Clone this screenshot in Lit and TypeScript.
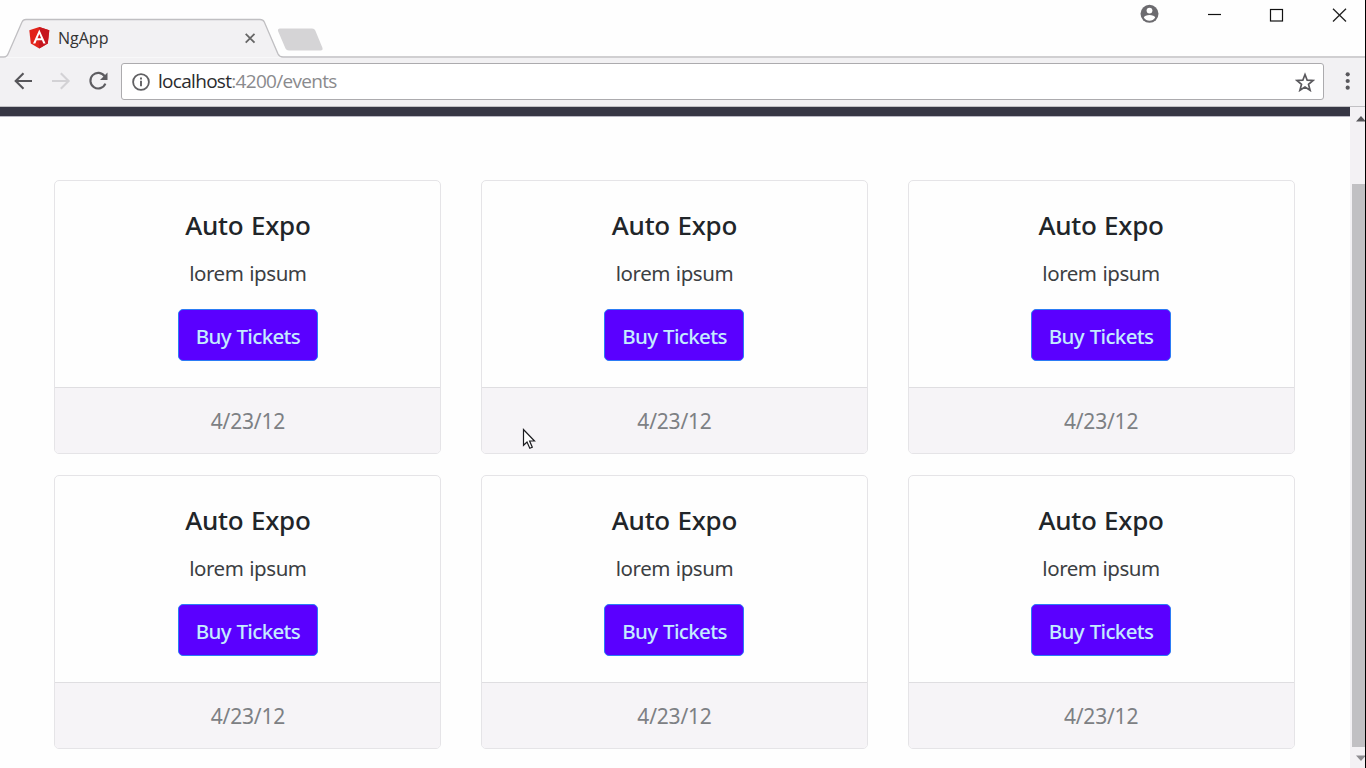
import { LitElement, html, css, svg } from "lit";
import { customElement, property } from "lit/decorators.js";

interface EventItem {
  title: string;
  description: string;
  date: string;
}

const EVENTS: EventItem[] = Array.from({ length: 6 }, () => ({
  title: "Auto Expo",
  description: "lorem ipsum",
  date: "4/23/12",
}));

@customElement("event-card")
export class EventCard extends LitElement {
  @property({ attribute: false }) event!: EventItem;

  static styles = css`
    :host {
      display: flex;
      flex-direction: column;
      box-sizing: border-box;
      height: 274px;
      border: 1px solid #e5e4e7;
      border-radius: 5px;
      background: #fefefe;
      overflow: hidden;
      text-align: center;
      white-space: nowrap;
      font-family: "Noto Sans", "Open Sans", sans-serif;
    }
    .body {
      flex: 1;
      display: flex;
      flex-direction: column;
      align-items: center;
      padding-top: 28px;
    }
    .title {
      margin: 0;
      font-size: 26px;
      line-height: 33px;
      font-weight: 500;
      letter-spacing: -0.25px;
      word-spacing: 1px;
      color: #212529;
    }
    .text {
      margin: 15px 0 0;
      font-size: 20.5px;
      line-height: 33px;
      letter-spacing: -0.45px;
      word-spacing: 1px;
      color: #3c3f43;
    }
    .buy {
      box-sizing: border-box;
      width: 140px;
      height: 52px;
      margin-top: 19px;
      padding: 1px 0 0;
      border: 1px solid #2b7cf5;
      border-radius: 5px;
      background: #5a00ff;
      color: #c4ecff;
      font: 500 20.5px/50px "Noto Sans", "Open Sans", sans-serif;
      letter-spacing: -0.65px;
      word-spacing: 1px;
    }
    .footer {
      box-sizing: border-box;
      height: 66px;
      border-top: 1px solid #dfdee1;
      background: #f6f4f7;
      color: #7d8084;
      font-size: 21px;
      line-height: 67px;
      letter-spacing: -0.2px;
    }
  `;

  render() {
    return html`
      <div class="body">
        <h5 class="title">${this.event.title}</h5>
        <p class="text">${this.event.description}</p>
        <button class="buy">Buy Tickets</button>
      </div>
      <div class="footer">${this.event.date}</div>
    `;
  }
}

@customElement("app-root")
export class AppRoot extends LitElement {
  static styles = css`
    :host {
      position: relative;
      display: flex;
      flex-direction: column;
      box-sizing: border-box;
      width: 1366px;
      height: 768px;
      border-right: 1px solid #000;
      background: #fefefe;
      overflow: hidden;
      font-family: "Noto Sans", "Open Sans", sans-serif;
    }
    svg {
      display: block;
    }
    .titlebar {
      height: 58px;
      flex: none;
      display: grid;
    }
    .titlebar > * {
      grid-area: 1 / 1;
    }
    .tab {
      display: flex;
      align-items: center;
      box-sizing: border-box;
      width: 260px;
      height: 38px;
      margin: 19px 0 0 28px;
    }
    .tab-name {
      flex: 1;
      margin-left: 8px;
      font-family: "Open Sans", sans-serif;
      font-size: 16px;
      line-height: 22px;
      color: #333;
    }
    .tab-close {
      margin-right: 32px;
    }
    .controls {
      justify-self: end;
      height: 30px;
    }
    .toolbar {
      flex: none;
      display: flex;
      align-items: flex-start;
      box-sizing: border-box;
      height: 49px;
      padding: 5px 0 0;
      background: #f2f1f3;
      border-bottom: 1px solid #c2c1c4;
    }
    .nav {
      width: 121px;
      flex: none;
    }
    .address {
      flex: none;
      display: flex;
      align-items: center;
      box-sizing: border-box;
      width: 1203px;
      height: 37px;
      margin: 0;
      padding: 0 8px 0 10px;
      border: 1px solid #acabae;
      border-radius: 3px;
      background: #fff;
    }
    .url {
      flex: 1;
      margin-left: 8px;
      font-family: "Open Sans", sans-serif;
      font-size: 19px;
      line-height: 27px;
      letter-spacing: -0.7px;
      color: #8a8a8d;
    }
    .host {
      color: #2b2b2d;
    }
    .viewport {
      flex: 1;
      min-height: 0;
      display: flex;
    }
    .page {
      width: 1350px;
      flex: none;
    }
    .navbar {
      height: 9px;
      background: #373744;
      border-bottom: 1px solid #b9b7c2;
      box-sizing: content-box;
    }
    .cards {
      display: grid;
      grid-template-columns: repeat(3, 387px);
      column-gap: 39.6px;
      row-gap: 21px;
      padding: 63px 0 0 54.4px;
    }
    .scrollbar {
      flex: 1;
      display: flex;
      flex-direction: column;
      padding-left: 2px;
      background: #f3f1f4;
    }
    .thumb {
      height: 563px;
      background: #c1c0c3;
    }
    .pointer {
      position: absolute;
      left: 522px;
      top: 428px;
    }
    .strip-line {
      margin-left: 340px;
    }
  `;

  private tabShape() {
    return html`<svg width="340" height="58" viewBox="0 0 340 58">
      <path d="M5.500 57.500L8.500 53L22 22Q23 19.500 26 19.500H260Q263 19.500 264.300 22L279 54Q280 57 283 57.500Z" fill="#f2f1f3" />
      <path d="M0 57H4Q7 57 8.500 53L22 22Q23 19.500 26 19.500H260Q263 19.500 264.300 22L278 54Q279.500 57 283 57H340" fill="none" stroke="#c0bfc2" stroke-width="1.300" />
      <path d="M280 28.500H312Q314.500 28.500 315.300 30.500L322.500 48Q323 50.500 320.500 50.500H289Q286.500 50.500 285.500 48.500L278 31Q277.500 28.500 280 28.500Z" fill="#d5d4d6" />
    </svg>`;
  }

  render() {
    return html`
      <div class="titlebar">
        ${this.tabShape()}
        <svg class="strip-line" width="1025" height="58">
          <path d="M0 57H1025" stroke="#c0bfc2" stroke-width="1.300" />
        </svg>
        <div class="tab">
          <svg width="22" height="24" viewBox="0 0 22 24">
            <path d="M11.300 1L21.300 4.300L19.800 17.500L11.300 22.500L2.800 17.500L1.300 4.300Z" fill="#e2231a" />
            <path d="M11.300 1L21.300 4.300L19.800 17.500L11.300 22.500Z" fill="#c6161f" />
            <path d="M11.300 3.500L5 17.500H7.400L8.700 14.300H14L15.300 17.500H17.600ZM11.300 8L13.100 12.300H9.500Z" fill="#fff" fill-rule="evenodd" />
          </svg>
          <span class="tab-name">NgApp</span>
          <svg class="tab-close" width="12" height="12" viewBox="0 0 12 12">
            <path d="M1.700 1.900L10.500 10.700M10.500 1.900L1.700 10.700" stroke="#666" stroke-width="1.800" />
          </svg>
        </div>
        <svg class="controls" width="230" height="30" viewBox="1135 0 230 30">
          <circle cx="1149.500" cy="13.800" r="9" fill="#6c6b6f" />
          <circle cx="1149.500" cy="10.600" r="2.900" fill="#fff" />
          <path d="M1143.800 17.600C1144.500 14.200 1154.500 14.200 1155.200 17.600Q1153 20.800 1149.500 20.800Q1146 20.800 1143.800 17.600Z" fill="#fff" />
          <path d="M1208 14.500H1221" stroke="#111" stroke-width="1.200" />
          <rect x="1270.500" y="9.500" width="12" height="11.500" fill="none" stroke="#111" stroke-width="1.200" />
          <path d="M1333 8.700L1346 21.500M1346 8.700L1333 21.500" stroke="#222" stroke-width="1.300" />
        </svg>
      </div>
      <div class="toolbar">
        <svg class="nav" width="121" height="38" viewBox="0 63 121 38">
          <path d="M32 81H16M23.500 73.200L15.700 81L23.500 88.800" fill="none" stroke="#57565a" stroke-width="2.100" />
          <path d="M52 81H68M60.800 73.200L68.600 81L60.800 88.800" fill="none" stroke="#d3d2d5" stroke-width="2.100" />
          <path d="M104.700 76.300A7.800 7.800 0 1 0 105.400 83.700" fill="none" stroke="#5d5c60" stroke-width="2.100" />
          <path d="M107.500 72.500V80H100Z" fill="#5d5c60" />
        </svg>
        <div class="address">
          <svg width="18" height="18" viewBox="0 0 18 18">
            <circle cx="9" cy="9" r="7.900" fill="none" stroke="#606063" stroke-width="1.800" />
            <path d="M9 7.800V13.200M9 4.600V6.500" stroke="#606063" stroke-width="1.900" />
          </svg>
          <span class="url"><span class="host">localhost</span><span class="path">:4200/events</span></span>
          <svg width="20" height="20" viewBox="0 0 20 20">
            <path d="M10 2.500L12.200 8.200L18.200 8.500L13.500 12.400L15.100 18.300L10 15L4.900 18.300L6.500 12.400L1.800 8.500L7.800 8.200Z" fill="none" stroke="#59585c" stroke-width="1.700" />
          </svg>
        </div>
        <svg width="41" height="38" viewBox="1324 63 41 38">
          ${[74.3, 81, 87.7].map((y) => svg`<circle cx="1347.700" cy=${y} r="2.100" fill="#59585c" />`)}
        </svg>
      </div>
      <div class="viewport">
        <div class="page">
          <div class="navbar"></div>
          <div class="cards">
            ${EVENTS.map((event) => html`<event-card .event=${event}></event-card>`)}
          </div>
        </div>
        <div class="scrollbar">
          <svg width="13" height="77" viewBox="1352 107 13 77">
            <path d="M1356 121.500H1366L1361 116Z" fill="#57565a" />
          </svg>
          <div class="thumb"></div>
          <svg width="13" height="21" viewBox="1352 747 13 21">
            <path d="M1356 755.500H1366L1361 761Z" fill="#8d8c90" />
          </svg>
        </div>
      </div>
      <svg class="pointer" width="14" height="22" viewBox="0 0 14 22">
        <path d="M1.500 1.500V17.300L5 14L7.800 20.300L10.300 19.200L7.600 13H12.500Z" fill="#fff" stroke="#1c1c20" stroke-width="1.200" />
      </svg>
    `;
  }
}
